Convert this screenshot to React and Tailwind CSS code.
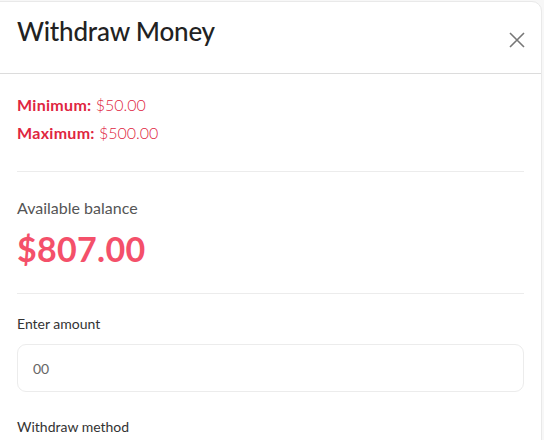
export default function App() {
    return (
        <div
            className="w-[544px] h-[440px] overflow-hidden bg-[#f7f7f7]"
            style={{ fontFamily: "Lato, 'Noto Sans', sans-serif" }}
        >
            <div className="ml-[-10px] mt-[1px] w-[552px] h-[450px] bg-white rounded-[10px] border border-[#e9e9e9]">
                {/* header */}
                <div className="h-[72px] flex items-start justify-between pl-[26px] pr-[12px] border-b border-[#dcdcdc]">
                    <h2 className="mt-[13px] text-[26px] leading-[32px] text-[#222] font-medium tracking-[-0.2px]">
                        Withdraw Money
                    </h2>
                    <button className="mt-[26px] p-[2px] text-[#777]">
                        <svg width="20" height="20" viewBox="0 0 20 20" fill="none" stroke="currentColor" strokeWidth="1.6">
                            <path d="M3 3 L17 17 M17 3 L3 17" />
                        </svg>
                    </button>
                </div>

                <div className="pl-[26px] pr-[17px]">
                    {/* limits */}
                    <div className="pt-[17px] pb-[24px] border-b border-[#ececec] text-[16px] leading-[28px] text-[#e0263f]">
                        <p>
                            <span className="font-bold tracking-[0.3px]">Minimum:</span> <span className="font-light">$50.00</span>
                        </p>
                        <p>
                            <span className="font-bold tracking-[0.3px]">Maximum:</span> <span className="font-light">$500.00</span>
                        </p>
                    </div>

                    {/* balance */}
                    <div className="pt-[25px] pb-[24px] border-b border-[#ececec]">
                        <p className="text-[16px] leading-[22px] text-[#555]">Available balance</p>
                        <p className="mt-[10px] text-[34px] leading-[40px] font-bold text-[#f4506a] tracking-[0.3px]">$807.00</p>
                    </div>

                    {/* amount */}
                    <div className="pt-[20px]">
                        <label className="block text-[14px] leading-[20px] text-[#333]">Enter amount</label>
                        <div className="mt-[10px] h-[48px] rounded-[9px] border border-[#ececec] flex items-center px-[15px] text-[14px] text-[#666]">
                            00
                        </div>
                        <p className="mt-[25px] text-[14px] leading-[20px] text-[#333]">Withdraw method</p>
                    </div>
                </div>
            </div>
        </div>
    );
}
